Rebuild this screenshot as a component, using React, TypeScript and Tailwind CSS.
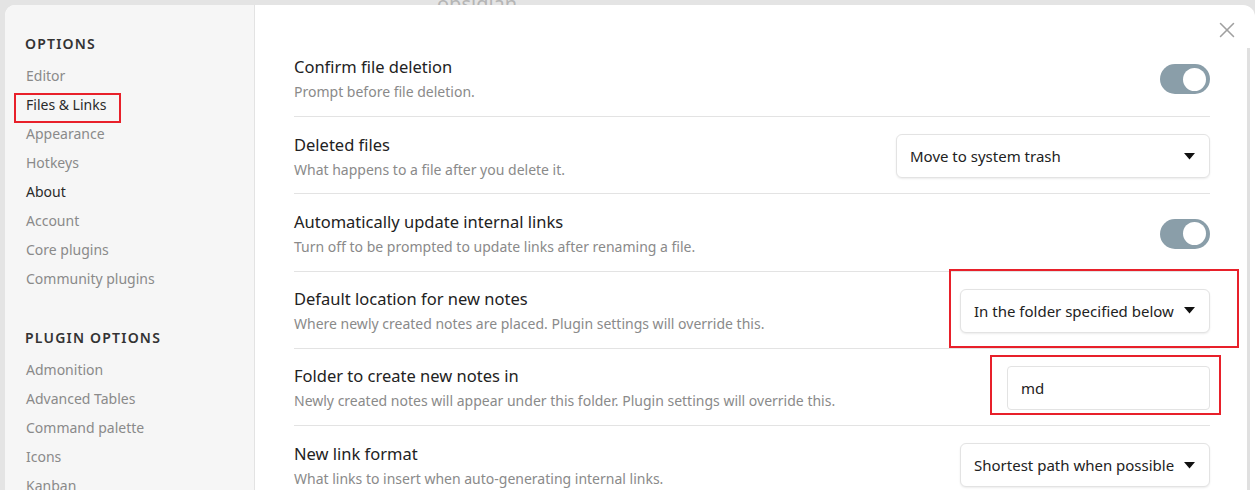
import { X } from "lucide-react";

type Control =
  | { kind: "toggle" }
  | { kind: "select"; value: string; width: string }
  | { kind: "text"; value: string };

type Setting = {
  title: string;
  desc: string;
  control: Control;
};

const optionItems = [
  { label: "Editor" },
  { label: "Files & Links", active: true },
  { label: "Appearance" },
  { label: "Hotkeys" },
  { label: "About", dark: true },
  { label: "Account" },
  { label: "Core plugins" },
  { label: "Community plugins" },
];

const pluginItems = ["Admonition", "Advanced Tables", "Command palette", "Icons", "Kanban"];

const settings: Setting[] = [
  {
    title: "Confirm file deletion",
    desc: "Prompt before file deletion.",
    control: { kind: "toggle" },
  },
  {
    title: "Deleted files",
    desc: "What happens to a file after you delete it.",
    control: { kind: "select", value: "Move to system trash", width: "w-[314px]" },
  },
  {
    title: "Automatically update internal links",
    desc: "Turn off to be prompted to update links after renaming a file.",
    control: { kind: "toggle" },
  },
  {
    title: "Default location for new notes",
    desc: "Where newly created notes are placed. Plugin settings will override this.",
    control: { kind: "select", value: "In the folder specified below", width: "w-[250px]" },
  },
  {
    title: "Folder to create new notes in",
    desc: "Newly created notes will appear under this folder. Plugin settings will override this.",
    control: { kind: "text", value: "md" },
  },
  {
    title: "New link format",
    desc: "What links to insert when auto-generating internal links.",
    control: { kind: "select", value: "Shortest path when possible", width: "w-[250px]" },
  },
];

function Caret() {
  return (
    <svg width="11" height="7" viewBox="0 0 11 7" className="shrink-0">
      <path d="M0 0 H11 L5.5 6.5 Z" fill="#111" />
    </svg>
  );
}

function Toggle() {
  return (
    <div className="w-[50px] h-[30px] rounded-full bg-[#8a9ea9] flex items-center justify-end pr-[4px]">
      <div className="w-[23px] h-[23px] rounded-full bg-white" />
    </div>
  );
}

function SettingControl({ control }: { control: Control }) {
  if (control.kind === "toggle") return <Toggle />;
  if (control.kind === "select") {
    return (
      <div
        className={`${control.width} h-[44px] rounded-[6px] border border-[#e3e3e3] bg-white shadow-[0_1px_2px_rgba(0,0,0,0.08)] flex items-center justify-between pl-[13px] pr-[14px] text-[15px] text-[#222]`}
      >
        <span>{control.value}</span>
        <Caret />
      </div>
    );
  }
  return (
    <div className="w-[203px] h-[44px] rounded-[4px] border border-[#e3e3e3] bg-white flex items-center pl-[13px] text-[15px] text-[#222]">
      {control.value}
    </div>
  );
}

export default function App() {
  return (
    <div
      className="w-[1255px] h-[490px] overflow-hidden bg-[#e4e4e4] pt-[5px] pl-[5px] relative"
      style={{ fontFamily: '"Segoe UI", "Noto Sans", "Open Sans", sans-serif' }}
    >
      {/* faint app chrome behind the modal */}
      <div className="absolute top-[-11px] left-[437px] text-[20px] text-[#b5b5b5]">obsidian</div>

      <div className="relative flex h-[485px] bg-white rounded-tl-[10px] rounded-tr-[12px] overflow-hidden">
        {/* Sidebar */}
        <aside className="w-[250px] shrink-0 bg-[#f6f6f6] border-r border-[#e3e3e3] pt-[28px] pl-[20px]">
          <div className="text-[14px] leading-[22px] font-semibold tracking-[1.2px] text-[#333] mb-[6px]">
            OPTIONS
          </div>
          {optionItems.map((item) => (
            <div
              key={item.label}
              className={`text-[14px] leading-[29px] pl-[1px] ${
                item.active || item.dark ? "text-[#2a2a2a]" : "text-[#8a8a8a]"
              }`}
            >
              {item.label}
            </div>
          ))}
          <div className="text-[14px] leading-[22px] font-semibold tracking-[1.2px] text-[#333] mt-[34px] mb-[6px]">
            PLUGIN OPTIONS
          </div>
          {pluginItems.map((label) => (
            <div key={label} className="text-[14px] leading-[29px] pl-[1px] text-[#8a8a8a]">
              {label}
            </div>
          ))}
        </aside>

        {/* Content */}
        <main className="flex-1 pt-[34.75px] pl-[39px] pr-[45px]">
          {settings.map((s) => (
            <div
              key={s.title}
              className="flex items-center justify-between h-[77.25px] border-b border-[#e3e3e3] pt-[15.5px] pb-[13px]"
            >
              <div className="self-start">
                <div className="text-[16.5px] leading-[24px] text-[#222]">{s.title}</div>
                <div className="text-[14px] leading-[22px] mt-[2px] text-[#8a8a8a]">{s.desc}</div>
              </div>
              <SettingControl control={s.control} />
            </div>
          ))}
        </main>

        {/* close + scrollbar */}
        <X className="absolute top-[12px] right-[15px] text-[#a0a0a0]" size={26} strokeWidth={1.4} />
        <div className="absolute top-[43px] bottom-0 right-[5px] w-[3px] bg-[#e0e0e0]" />

        {/* annotation boxes */}
        <div className="absolute left-[9px] top-[88px] w-[107px] h-[30px] border-2 border-[#e8202a]" />
        <div className="absolute left-[944px] top-[264px] w-[290px] h-[79px] border-2 border-[#e8202a]" />
        <div className="absolute left-[985px] top-[350px] w-[231px] h-[60px] border-2 border-[#e8202a]" />
      </div>
    </div>
  );
}
